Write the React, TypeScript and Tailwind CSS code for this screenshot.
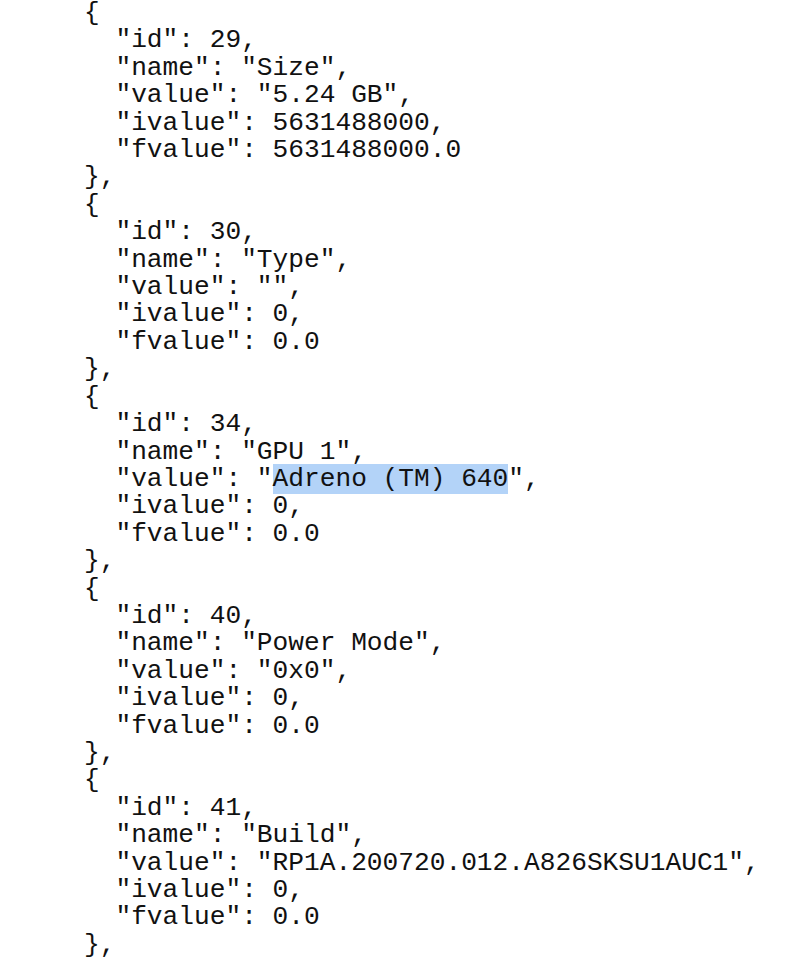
import React from 'react';

interface Entry {
    id: number;
    name: string;
    value: string;
    ivalue: string;
    fvalue: string;
    highlight?: boolean;
}

const entries: Entry[] = [
    { id: 29, name: 'Size', value: '5.24 GB', ivalue: '5631488000', fvalue: '5631488000.0' },
    { id: 30, name: 'Type', value: '', ivalue: '0', fvalue: '0.0' },
    { id: 34, name: 'GPU 1', value: 'Adreno (TM) 640', ivalue: '0', fvalue: '0.0', highlight: true },
    { id: 40, name: 'Power Mode', value: '0x0', ivalue: '0', fvalue: '0.0' },
    { id: 41, name: 'Build', value: 'RP1A.200720.012.A826SKSU1AUC1', ivalue: '0', fvalue: '0.0' },
];

const Line = ({ children, indent = false }: { children: React.ReactNode; indent?: boolean }) => (
    <div className={indent ? 'pl-[2ch]' : ''}>{children}</div>
);

export default function App() {
    return (
        <div className="min-h-[960px] w-full overflow-hidden bg-white">
            <div className="whitespace-pre pl-[84px] pt-0 text-[26.2px] leading-[27.4px] text-[#111111] [font-family:'Liberation_Mono','Courier_New',monospace]">
                {entries.map((e) => (
                    <React.Fragment key={e.id}>
                        <Line>{'{'}</Line>
                        <Line indent>{`"id": ${e.id},`}</Line>
                        <Line indent>{`"name": "${e.name}",`}</Line>
                        <Line indent>
                            {'"value": "'}
                            {e.highlight ? (
                                <span className="bg-[#b3d3f8]">{e.value}</span>
                            ) : (
                                e.value
                            )}
                            {'",'}
                        </Line>
                        <Line indent>{`"ivalue": ${e.ivalue},`}</Line>
                        <Line indent>{`"fvalue": ${e.fvalue}`}</Line>
                        <Line>{'},'}</Line>
                    </React.Fragment>
                ))}
            </div>
        </div>
    );
}
